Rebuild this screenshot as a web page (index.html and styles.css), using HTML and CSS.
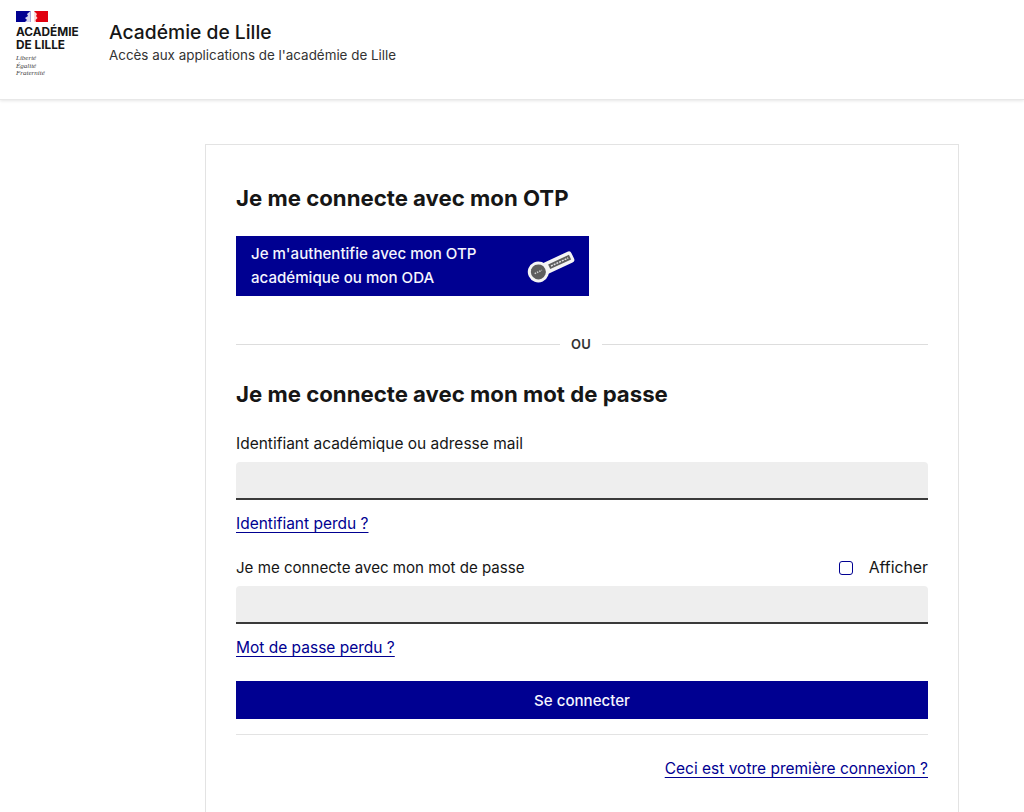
FILE: index.html
```html
<!DOCTYPE html>
<html lang="fr">
<head>
  <meta charset="UTF-8">
  <meta name="viewport" content="width=device-width, initial-scale=1.0">
  <title>Académie de Lille</title>
  <link rel="stylesheet" href="styles.css">
</head>
<body>
  <header class="site-header">
    <div class="logo">
      <svg class="logo-flag" width="32" height="11" viewBox="0 0 32 11">
        <rect x="0" y="0" width="14.5" height="11" fill="#000091"/>
        <rect x="18" y="0" width="14" height="11" fill="#e1000f"/>
        <path d="M14.5 0 L11 3 L12 5 L9 7 L11 9 L9 11 L14.5 11 Z" fill="#d5d6ee"/>
        <path d="M18 0 L21 3 L20 5 L21.5 7 L19.5 9 L20 11 L18 11 Z" fill="#fbd8d8"/>
      </svg>
      <div class="logo-name">ACADÉMIE<br>DE LILLE</div>
      <div class="logo-motto">Liberté<br>Égalité<br>Fraternité</div>
    </div>
    <div class="site-title">
      <div class="site-name">Académie de Lille</div>
      <div class="site-tagline">Accès aux applications de l'académie de Lille</div>
    </div>
  </header>

  <main class="login-card">
    <h2 class="card-title">Je me connecte avec mon OTP</h2>
    <button class="otp-button">
      <span>Je m'authentifie avec mon OTP<br>académique ou mon ODA</span>
      <svg class="otp-icon" width="48" height="34" viewBox="0 0 48 34">
        <g transform="rotate(-25 24 17)">
          <rect x="13" y="11" width="35" height="12" rx="3" fill="#f4f4f4"/>
          <circle cx="10" cy="17" r="10.5" fill="#f4f4f4"/>
          <circle cx="10" cy="17" r="7.5" fill="#5e5e5e"/>
          <rect x="22" y="14.5" width="23" height="5" fill="#5e5e5e"/>
          <path d="M6 17 H14" stroke="#cfcfcf" stroke-width="1.5" stroke-dasharray="1.5 1"/>
          <path d="M24 17 H43" stroke="#e2e2e2" stroke-width="1.5" stroke-dasharray="2 1"/>
        </g>
      </svg>
    </button>

    <div class="separator"><span>OU</span></div>

    <h2 class="card-title">Je me connecte avec mon mot de passe</h2>
    <form class="login-form">
      <div class="form-group">
        <label class="field-label" for="login">Identifiant académique ou adresse mail</label>
        <input class="field-input" type="text" id="login">
        <a class="field-link" href="#">Identifiant perdu ?</a>
      </div>
      <div class="form-group">
        <div class="label-row">
          <label class="field-label compact" for="password">Je me connecte avec mon mot de passe</label>
          <label class="show-password"><span class="checkbox"></span>Afficher</label>
        </div>
        <input class="field-input" type="password" id="password">
        <a class="field-link" href="#">Mot de passe perdu ?</a>
      </div>
      <button class="submit-button" type="button">Se connecter</button>
    </form>
    <div class="card-footer">
      <a class="field-link" href="#">Ceci est votre première connexion ?</a>
    </div>
  </main>
</body>
</html>
```

FILE: styles.css
```css
html, body {
  height: 812px;
  overflow: hidden;
}
body {
  margin: 0;
  font-family: "Inter", "Noto Sans", sans-serif;
  color: #161616;
  background-color: #fff;
}
.site-header {
  display: flex;
  height: 100px;
  box-sizing: border-box;
  padding: 11px 16px 0;
  border-bottom: 1px solid #e8e8e8;
  box-shadow: 0 1px 3px rgba(0,0,0,.1);
}
.logo {
  width: 93px;
  flex-shrink: 0;
}
.logo-flag {
  display: block;
}
.logo-name {
  margin-top: 4px;
  font-size: 11.8px;
  line-height: 13px;
  font-weight: 700;
  color: #161616;
}
.logo-motto {
  margin-top: 3px;
  font-family: "Liberation Serif", serif;
  font-style: italic;
  font-size: 7px;
  line-height: 7.5px;
  color: #444;
}
.site-title {
  padding-top: 10px;
}
.site-name {
  font-size: 19.3px;
  line-height: 22px;
  font-weight: 500;
}
.site-tagline {
  margin-top: 2px;
  font-size: 13.4px;
  line-height: 20px;
  color: #333;
}
.login-card {
  width: 754px;
  box-sizing: border-box;
  margin: 44px 0 0 205px;
  padding: 39px 30px 0;
  height: 700px;
  border: 1px solid #e3e3e3;
}
.card-title {
  margin: 0;
  font-size: 22.2px;
  line-height: 28px;
  font-weight: 700;
}
.otp-button {
  display: flex;
  align-items: center;
  justify-content: space-between;
  width: 353px;
  height: 60px;
  margin-top: 24px;
  padding: 0 14px 0 15px;
  border: none;
  background-color: #000091;
  color: #f5f5fe;
  font-family: inherit;
  font-size: 15.1px;
  font-weight: 500;
  line-height: 24px;
  text-align: left;
}
.separator {
  display: flex;
  align-items: center;
  gap: 11px;
  margin-top: 38px;
  font-size: 13px;
  line-height: 20px;
  font-weight: 600;
  letter-spacing: .3px;
  color: #333;
}
.separator::before,
.separator::after {
  content: "";
  height: 1px;
  background-color: #ddd;
}
.separator::before {
  width: 324px;
}
.separator::after {
  flex: 1;
}
.separator + .card-title {
  margin-top: 26px;
}
.login-form {
  margin-top: 26px;
}
.form-group {
  margin-bottom: 24px;
}
.field-label {
  display: block;
  font-size: 15.5px;
  line-height: 20px;
}
.field-label.compact {
  font-size: 15.1px;
}
.field-input {
  display: block;
  width: 100%;
  height: 38px;
  box-sizing: border-box;
  margin: 8px 0 13px;
  border: none;
  border-bottom: 2px solid #3a3a3a;
  border-radius: 4px 4px 0 0;
  background-color: #eee;
}
.field-link {
  display: inline-block;
  font-size: 15.5px;
  line-height: 20px;
  color: #000091;
  text-decoration: underline;
  text-underline-offset: 3px;
}
.label-row {
  display: flex;
  justify-content: space-between;
}
.show-password {
  display: flex;
  align-items: center;
  gap: 16px;
  font-size: 15.8px;
  line-height: 20px;
}
.checkbox {
  width: 12px;
  height: 12px;
  border: 1.5px solid #000091;
  border-radius: 3px;
}
.submit-button {
  display: block;
  width: 100%;
  height: 38px;
  margin-top: -1px;
  border: none;
  background-color: #000091;
  color: #f5f5fe;
  font-family: inherit;
  font-size: 15.1px;
  font-weight: 500;
}
.card-footer {
  margin-top: 15px;
  padding-top: 23px;
  border-top: 1px solid #e3e3e3;
  text-align: right;
}
```
